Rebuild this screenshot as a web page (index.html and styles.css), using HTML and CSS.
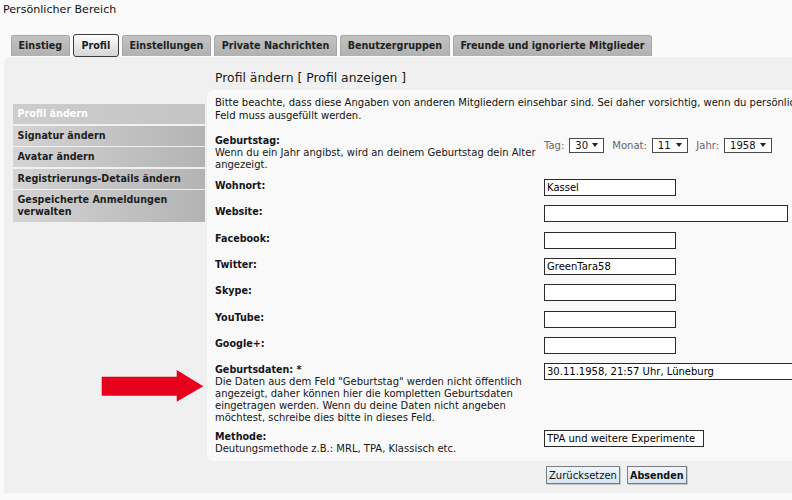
FILE: index.html
```html
<!DOCTYPE html>
<html lang="de">
<head>
<meta charset="utf-8">
<title>Persönlicher Bereich</title>
<link rel="stylesheet" href="styles.css">
</head>
<body>
<div class="page">
  <h1 class="title">Persönlicher Bereich</h1>
  <ul class="tabs">
    <li class="tab">Einstieg</li>
    <li class="tab active">Profil</li>
    <li class="tab">Einstellungen</li>
    <li class="tab">Private Nachrichten</li>
    <li class="tab">Benutzergruppen</li>
    <li class="tab">Freunde und ignorierte Mitglieder</li>
  </ul>
  <div class="panel">
    <div class="sidebar">
      <ul class="menu">
        <li class="menu-item active">Profil ändern</li>
        <li class="menu-item">Signatur ändern</li>
        <li class="menu-item">Avatar ändern</li>
        <li class="menu-item">Registrierungs-Details ändern</li>
        <li class="menu-item">Gespeicherte Anmeldungen verwalten</li>
      </ul>
    </div>
    <div class="main">
      <h2 class="heading">Profil ändern <a class="heading-link" href="#">[ Profil anzeigen ]</a></h2>
      <div class="box">
        <p class="intro">Bitte beachte, dass diese Angaben von anderen Mitgliedern einsehbar sind. Sei daher vorsichtig, wenn du persönliche Informationen angibst. Jedes mit * markierte<br>Feld muss ausgefüllt werden.</p>
        <div class="form">
          <div class="row row-birthday">
            <div class="label"><span class="label-title">Geburtstag:</span><span class="desc">Wenn du ein Jahr angibst, wird an deinem Geburtstag dein Alter<br>angezeigt.</span></div>
            <div class="field date-field">
              <span class="date-label">Tag:</span>
              <span class="select sel-day">30<span class="caret"></span></span>
              <span class="date-label">Monat:</span>
              <span class="select sel-month">11<span class="caret"></span></span>
              <span class="date-label">Jahr:</span>
              <span class="select sel-year">1958<span class="caret"></span></span>
            </div>
          </div>
          <div class="row">
            <div class="label"><span class="label-title">Wohnort:</span></div>
            <div class="field"><input class="input input-short" type="text" value="Kassel"></div>
          </div>
          <div class="row">
            <div class="label"><span class="label-title">Website:</span></div>
            <div class="field"><input class="input input-wide" type="text" value=""></div>
          </div>
          <div class="row">
            <div class="label"><span class="label-title">Facebook:</span></div>
            <div class="field"><input class="input input-short" type="text" value=""></div>
          </div>
          <div class="row">
            <div class="label"><span class="label-title">Twitter:</span></div>
            <div class="field"><input class="input input-short" type="text" value="GreenTara58"></div>
          </div>
          <div class="row">
            <div class="label"><span class="label-title">Skype:</span></div>
            <div class="field"><input class="input input-short" type="text" value=""></div>
          </div>
          <div class="row">
            <div class="label"><span class="label-title">YouTube:</span></div>
            <div class="field"><input class="input input-short" type="text" value=""></div>
          </div>
          <div class="row">
            <div class="label"><span class="label-title">Google+:</span></div>
            <div class="field"><input class="input input-short" type="text" value=""></div>
          </div>
          <div class="row row-tall">
            <div class="label"><span class="label-title">Geburtsdaten: *</span><span class="desc">Die Daten aus dem Feld "Geburtstag" werden nicht öffentlich<br>angezeigt, daher können hier die kompletten Geburtsdaten<br>eingetragen werden. Wenn du deine Daten nicht angeben<br>möchtest, schreibe dies bitte in dieses Feld.</span></div>
            <div class="field"><input class="input input-long" type="text" value="30.11.1958, 21:57 Uhr, Lüneburg"></div>
          </div>
          <div class="row row-last">
            <div class="label"><span class="label-title">Methode:</span><span class="desc">Deutungsmethode z.B.: MRL, TPA, Klassisch etc.</span></div>
            <div class="field"><input class="input input-method" type="text" value="TPA und weitere Experimente"></div>
          </div>
        </div>
      </div>
      <div class="buttons">
        <button class="btn" type="reset">Zurücksetzen</button>
        <button class="btn btn-primary" type="submit">Absenden</button>
      </div>
    </div>
  </div>
  <svg class="arrow" viewBox="0 0 104 34" width="104" height="34" aria-hidden="true">
    <polygon points="1.7,7.7 76.7,7.7 76.7,1 103.3,17.3 76.7,32.7 76.7,26.7 1.7,26.7" fill="#e6001c"/>
  </svg>
</div>
</body>
</html>
```

FILE: styles.css
```css
* { box-sizing: border-box; }

html, body {
  margin: 0;
  padding: 0;
}

body {
  width: 792px;
  height: 500px;
  overflow: hidden;
  background: #fafafa;
  font-family: "DejaVu Sans", Verdana, sans-serif;
  color: #111;
}

.page {
  width: 1000px;
  position: relative;
}

.title {
  margin: 0;
  padding: 3px 0 0 3px;
  font-size: 11.1px;
  line-height: 13px;
  font-weight: normal;
  color: #111;
}

.tabs {
  display: flex;
  align-items: flex-end;
  gap: 3.3px;
  height: 23px;
  margin: 18px 0 0 11px;
  padding: 0;
  list-style: none;
}

.tab {
  height: 21px;
  margin-bottom: 1px;
  padding: 0 6.5px;
  background: linear-gradient(#c2c2c2, #b1b1b1);
  border: 1px solid #a6a6a6;
  border-bottom: none;
  border-radius: 3px 3px 0 0;
  font-size: 9.6px;
  font-weight: bold;
  line-height: 20px;
  color: #222;
  white-space: nowrap;
}

.tab.active {
  height: 23px;
  margin-bottom: 0;
  padding: 0 7.5px;
  background: linear-gradient(#fdfdfd, #d5d5d5);
  border: 1px solid #3a3a3a;
  border-radius: 3px;
  line-height: 21px;
}

.panel {
  display: flex;
  height: 435.5px;
  margin-left: 4px;
  padding-left: 9px;
  background: #f0f0f0;
  border-radius: 6px 0 0 0;
}

.sidebar {
  flex: none;
  width: 192px;
  padding-top: 47px;
}

.menu {
  margin: 0;
  padding: 0;
  list-style: none;
}

.menu-item {
  margin-bottom: 1.5px;
  padding: 4.25px 4.5px;
  background: linear-gradient(to right, #d4d4d4, #b3b3b3);
  font-size: 9.6px;
  font-weight: bold;
  line-height: 11.5px;
  color: #1e1e1e;
}

.menu-item.active {
  background: linear-gradient(to right, #cdcdcd, #c4c4c4);
  color: #fff;
}

.main {
  flex: none;
  width: 800px;
  margin-left: 2px;
  padding-top: 13px;
}

.heading {
  margin: 0 0 5px 8px;
  font-size: 12.4px;
  line-height: 15px;
  font-weight: normal;
  color: #1a1a1a;
}

.heading-link {
  color: #1a1a1a;
  text-decoration: none;
}

.box {
  padding: 5.5px 8px 6.5px;
  background: #f9f9f9;
  border-radius: 6px;
}

.intro {
  margin: 0 0 12px;
  font-size: 10px;
  line-height: 13px;
  white-space: nowrap;
}

.row {
  display: flex;
  align-items: flex-start;
  margin-bottom: 9.33px;
}

.row-birthday { margin-bottom: 8.5px; }
.row-tall { margin-bottom: 5.7px; }
.row-last { margin-bottom: 0; }

.label {
  flex: none;
  width: 329px;
  padding-top: 1px;
  font-size: 10px;
  line-height: 12px;
  color: #161616;
}

.label-title {
  display: block;
  font-size: 9.6px;
  font-weight: bold;
  color: #141420;
}

.desc {
  display: block;
  white-space: nowrap;
}

.field {
  flex: none;
}

.date-field {
  display: flex;
  align-items: center;
  height: 15.5px;
  margin-top: 4px;
  font-size: 10px;
  color: #666;
}

.date-label {
  margin-right: 5px;
}

.date-label + .select { margin-right: 8px; }

.select {
  display: inline-flex;
  align-items: center;
  justify-content: space-between;
  height: 15.5px;
  padding: 0 5px 0 5px;
  background: #fff;
  border: 1px solid #4a4a4a;
  font-size: 10px;
  color: #111;
}

.sel-day { width: 35px; }
.sel-month { width: 36.5px; }
.sel-year { width: 48px; }

.caret {
  width: 0;
  height: 0;
  border-left: 3px solid transparent;
  border-right: 3px solid transparent;
  border-top: 4px solid #222;
}

.input {
  display: block;
  height: 17px;
  margin: 0;
  padding: 0 2px;
  background: #fff;
  border: 1px solid #2b2b2b;
  border-radius: 0;
  font-family: "DejaVu Sans", Verdana, sans-serif;
  font-size: 10px;
  line-height: 15px;
  color: #000;
}

.input-short { width: 131.5px; }
.input-wide { width: 243.5px; }
.input-long { width: 300px; }
.input-method { width: 159.5px; }

.buttons {
  display: flex;
  gap: 7px;
  margin: 4.5px 0 0 339px;
}

.btn {
  height: 18.3px;
  margin: 0;
  padding: 0 2px;
  background: linear-gradient(#eef5fc, #d6e5f3);
  border: 1px solid #7c7c7c;
  border-radius: 0;
  box-shadow: 1px 1px 0 #c8c8c8;
  font-family: "DejaVu Sans", Verdana, sans-serif;
  font-size: 10px;
  color: #111;
}

.btn-primary {
  font-size: 9.6px;
  font-weight: bold;
}

.arrow {
  position: absolute;
  left: 100px;
  top: 369px;
}
```
